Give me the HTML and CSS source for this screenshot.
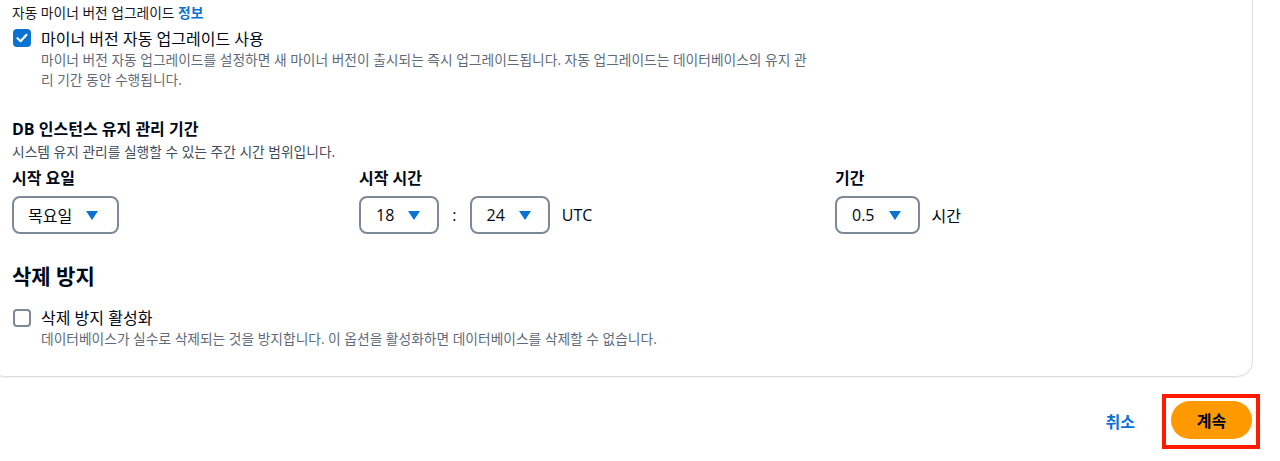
FILE: index.html
```html
<!DOCTYPE html>
<html lang="ko">
<head>
<meta charset="utf-8">
<link rel="stylesheet" href="styles.css">
</head>
<body>
<div class="card">
  <div class="field-label">자동 마이너 버전 업그레이드 <a class="info">정보</a></div>
  <div class="check-row">
    <span class="checkbox checked">
      <svg viewBox="0 0 18 18" width="18" height="18"><path d="M4.5 9.2 L7.6 12.2 L13.5 5.8" fill="none" stroke="#fff" stroke-width="2.2" stroke-linecap="round" stroke-linejoin="round"/></svg>
    </span>
    <div class="check-text">
      <div class="check-label">마이너 버전 자동 업그레이드 사용</div>
      <div class="desc wrap">마이너 버전 자동 업그레이드를 설정하면 새 마이너 버전이 출시되는 즉시 업그레이드됩니다. 자동 업그레이드는 데이터베이스의 유지 관리 기간 동안 수행됩니다.</div>
    </div>
  </div>

  <div class="section-title">DB 인스턴스 유지 관리 기간</div>
  <div class="desc2">시스템 유지 관리를 실행할 수 있는 주간 시간 범위입니다.</div>
  <div class="grid">
    <div class="col">
      <div class="col-label">시작 요일</div>
      <div class="controls">
        <span class="select text"><span>목요일</span><span class="caret"></span></span>
      </div>
    </div>
    <div class="col">
      <div class="col-label">시작 시간</div>
      <div class="controls">
        <span class="select"><span>18</span><span class="caret"></span></span>
        <span class="sep">:</span>
        <span class="select"><span>24</span><span class="caret"></span></span>
        <span class="unit">UTC</span>
      </div>
    </div>
    <div class="col">
      <div class="col-label">기간</div>
      <div class="controls">
        <span class="select"><span>0.5</span><span class="caret"></span></span>
        <span class="unit">시간</span>
      </div>
    </div>
  </div>

  <h2 class="heading">삭제 방지</h2>
  <div class="check-row second">
    <span class="checkbox"></span>
    <div class="check-text">
      <div class="check-label">삭제 방지 활성화</div>
      <div class="desc">데이터베이스가 실수로 삭제되는 것을 방지합니다. 이 옵션을 활성화하면 데이터베이스를 삭제할 수 없습니다.</div>
    </div>
  </div>
</div>

<div class="footer">
  <a class="cancel">취소</a>
  <span class="highlight"><button class="primary">계속</button></span>
</div>
</body>
</html>
```

FILE: styles.css
```css
html, body {
  margin: 0;
  padding: 0;
  background: #ffffff;
  font-family: "Open Sans", "Noto Sans CJK KR", sans-serif;
  color: #000716;
  overflow: hidden;
}

.card {
  margin: -20px 27px 0 -12px;
  padding: 22px 24px 27px 23px;
  border: 1px solid #dcdde0;
  border-radius: 0 0 16px 16px;
  box-shadow: 0 1px 1px rgba(0, 7, 22, 0.05);
}

.field-label {
  font-size: 13.75px;
  line-height: 20px;
  color: #16191f;
}

.info {
  color: #0972d3;
  font-weight: 700;
  text-decoration: none;
}

.check-row {
  display: flex;
  align-items: flex-start;
  gap: 10px;
  margin-top: 5px;
  padding-left: 1px;
}

.checkbox {
  flex: none;
  width: 18px;
  height: 18px;
  box-sizing: border-box;
  border: 2px solid #7d8998;
  border-radius: 4px;
  margin-top: 1px;
  display: flex;
  align-items: center;
  justify-content: center;
}

.checkbox.checked {
  background: #0972d3;
  border-color: #0972d3;
}

.checkbox.checked svg {
  flex: none;
}

.check-label {
  font-size: 16px;
  line-height: 22px;
  color: #000716;
}

.desc {
  font-size: 13.75px;
  line-height: 19.5px;
  color: #5f6b7a;
}

.desc.wrap {
  max-width: 772px;
  word-break: break-all;
}

.section-title {
  margin-top: 29px;
  font-size: 16px;
  line-height: 22px;
  font-weight: 700;
}

.desc2 {
  margin-top: 2px;
  font-size: 13.75px;
  line-height: 20px;
  color: #414d5c;
}

.grid {
  display: grid;
  grid-template-columns: 347px 476px 1fr;
  margin-top: 5px;
}

.col-label {
  font-size: 16px;
  line-height: 22px;
  font-weight: 700;
}

.controls {
  display: flex;
  align-items: center;
  gap: 12px;
  margin-top: 7px;
}

.select {
  display: inline-flex;
  align-items: center;
  gap: 14px;
  height: 38px;
  box-sizing: border-box;
  padding: 0 17px 0 15px;
  border: 2px solid #7d8998;
  border-radius: 8px;
  font-size: 16px;
  color: #000716;
}

.select.text {
  padding: 0 19px 0 14px;
  gap: 14px;
}

.caret {
  width: 0;
  height: 0;
  border-left: 6.5px solid transparent;
  border-right: 6.5px solid transparent;
  border-top: 9px solid #0972d3;
}

.sep {
  font-size: 16px;
  padding: 0 1px;
}

.unit {
  font-size: 16px;
}

.heading {
  margin: 29px 0 0 0;
  font-size: 21px;
  line-height: 26px;
  font-weight: 700;
}

.check-row.second {
  margin-top: 18px;
}

.check-row.second .checkbox {
  margin-top: 2px;
}

.footer {
  display: flex;
  justify-content: flex-end;
  align-items: center;
  gap: 27px;
  padding: 17px 20px 0 0;
}

.cancel {
  color: #0972d3;
  font-weight: 700;
  font-size: 16px;
  text-decoration: none;
}

.highlight {
  display: inline-flex;
  border: 4px solid #ff1a00;
  padding: 3px 4px 6px 5px;
}

.primary {
  height: 38px;
  width: 81px;
  border: none;
  border-radius: 20px;
  background: #ff9900;
  color: #000716;
  font-family: "Open Sans", "Noto Sans CJK KR", sans-serif;
  font-weight: 700;
  font-size: 16px;
  padding: 0;
}
```
